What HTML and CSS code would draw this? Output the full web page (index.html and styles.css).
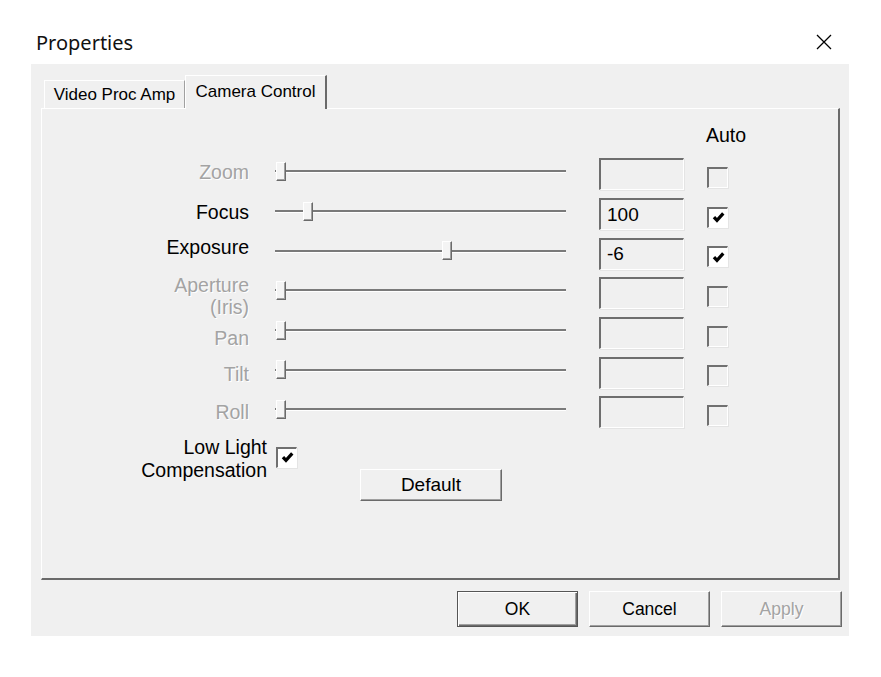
FILE: index.html
```html
<!DOCTYPE html>
<html>
<head>
<meta charset="utf-8">
<title>Properties</title>
<link rel="stylesheet" href="styles.css">
</head>
<body>
<div class="screen">
  <div class="titlebar">
    <span class="title">Properties</span>
    <svg class="close" viewBox="0 0 16 16"><path d="M1 1 L15 15 M15 1 L1 15" stroke="#000" stroke-width="1.3" fill="none"/></svg>
  </div>
  <div class="dialog">
    <div class="tabs">
      <div class="tab">Video Proc Amp</div>
      <div class="tab active">Camera Control</div>
    </div>
    <div class="panel">
      <div class="head"><span class="auto">Auto</span></div>

      <div class="row">
        <div class="label off">Zoom</div>
        <div class="slider"><div class="track"></div><div class="thumb" style="left:3px"></div></div>
        <div class="field"></div>
        <div class="cb"></div>
      </div>
      <div class="row">
        <div class="label">Focus</div>
        <div class="slider"><div class="track"></div><div class="thumb" style="left:30px"></div></div>
        <div class="field">100</div>
        <div class="cb on"><svg viewBox="0 0 12 12"><polyline points="1.8,5.6 4.6,8.6 10.4,2.2" stroke="#000" stroke-width="3" fill="none"/></svg></div>
      </div>
      <div class="row">
        <div class="label raise">Exposure</div>
        <div class="slider"><div class="track"></div><div class="thumb" style="left:169px"></div></div>
        <div class="field">-6</div>
        <div class="cb on"><svg viewBox="0 0 12 12"><polyline points="1.8,5.6 4.6,8.6 10.4,2.2" stroke="#000" stroke-width="3" fill="none"/></svg></div>
      </div>
      <div class="row">
        <div class="label off two">Aperture<br>(Iris)</div>
        <div class="slider"><div class="track"></div><div class="thumb" style="left:3px"></div></div>
        <div class="field"></div>
        <div class="cb"></div>
      </div>
      <div class="row">
        <div class="label off drop7">Pan</div>
        <div class="slider"><div class="track"></div><div class="thumb" style="left:3px"></div></div>
        <div class="field"></div>
        <div class="cb"></div>
      </div>
      <div class="row">
        <div class="label off drop4">Tilt</div>
        <div class="slider"><div class="track"></div><div class="thumb" style="left:3px"></div></div>
        <div class="field"></div>
        <div class="cb"></div>
      </div>
      <div class="row">
        <div class="label off drop2">Roll</div>
        <div class="slider"><div class="track"></div><div class="thumb" style="left:3px"></div></div>
        <div class="field"></div>
        <div class="cb"></div>
      </div>

      <div class="lowlight">
        <div class="ll-label">Low Light<br>Compensation</div>
        <div class="cb on ll-cb"><svg viewBox="0 0 12 12"><polyline points="1.8,5.6 4.6,8.6 10.4,2.2" stroke="#000" stroke-width="3" fill="none"/></svg></div>
        <div class="btn defaultbtn">Default</div>
      </div>
    </div>
    <div class="buttons">
      <div class="btn primary">OK</div>
      <div class="btn">Cancel</div>
      <div class="btn disabled">Apply</div>
    </div>
  </div>
</div>
</body>
</html>
```
FILE: styles.css
```css
body {
  margin: 0;
  background: #fff;
  font-family: "Liberation Sans", Arial, sans-serif;
  color: #000;
}
.screen {
  width: 881px;
  height: 677px;
}
.titlebar {
  height: 44px;
  padding: 20px 49px 0 36px;
  display: flex;
  align-items: center;
  justify-content: space-between;
}
.title {
  font-family: "Noto Sans", sans-serif;
  font-size: 20px;
  color: #111;
}
.close {
  width: 16px;
  height: 16px;
}
.dialog {
  margin-left: 31px;
  width: 818px;
  height: 561px;
  padding-top: 11px;
  background: #f0f0f0;
}
.tabs {
  display: flex;
  align-items: flex-end;
  height: 33px;
  padding-left: 13px;
}
.tab {
  width: 141px;
  height: 28px;
  box-sizing: border-box;
  border-top: 1px solid #fff;
  border-left: 1px solid #fff;
  border-right: 1px solid #a0a0a0;
  font-size: 17px;
  display: flex;
  align-items: center;
  justify-content: center;
  background: #f0f0f0;
}
.tab.active {
  width: 142px;
  height: 34px;
  margin-bottom: -1px;
  border-right: 2px solid #6a6a6a;
  padding-bottom: 2px;
  position: relative;
  z-index: 1;
}
.panel {
  margin-left: 10px;
  width: 799px;
  height: 472px;
  box-sizing: border-box;
  border-top: 1px solid #fff;
  border-left: 1px solid #fff;
  border-right: 2px solid #6a6a6a;
  border-bottom: 2px solid #6a6a6a;
  padding-top: 9px;
}
.head {
  height: 34px;
  display: flex;
  align-items: center;
}
.auto {
  margin-left: 664px;
  font-size: 19.5px;
}
.row {
  height: 39.7px;
  display: flex;
  align-items: center;
}
.label {
  width: 207px;
  text-align: right;
  font-size: 19.5px;
  line-height: 22px;
}
.label.two {
  margin-top: 10px;
}
.label.raise {
  margin-bottom: 8px;
}
.label.drop7 {
  margin-top: 14px;
}
.label.drop4 {
  margin-top: 8px;
}
.label.drop2 {
  margin-top: 4px;
}
.off {
  color: #a3a3a3;
  text-shadow: 1px 1px 0 #fff;
}
.slider {
  position: relative;
  width: 295px;
  height: 22px;
  margin-left: 24px;
  display: flex;
  align-items: center;
}
.track {
  flex: 1;
  margin: 0 2px;
  height: 0;
  border-top: 2px solid #7a7a7a;
  border-bottom: 1px solid #fff;
}
.thumb {
  position: absolute;
  top: 1px;
  width: 10px;
  height: 19px;
  box-sizing: border-box;
  background: #f4f4f4;
  border-top: 1px solid #fff;
  border-left: 1px solid #fff;
  border-right: 1px solid #6a6a6a;
  border-bottom: 1px solid #6a6a6a;
  box-shadow: inset -1px -1px 0 #a0a0a0;
}
.field {
  width: 85px;
  height: 32px;
  margin-left: 31px;
  margin-top: 5px;
  box-sizing: border-box;
  border-top: 2px solid #6e6e6e;
  border-left: 2px solid #6e6e6e;
  border-right: 1px solid #fff;
  border-bottom: 1px solid #fff;
  box-shadow: 1px 1px 0 #e4e4e4;
  padding-left: 6px;
  font-size: 19px;
  display: flex;
  align-items: center;
}
.cb {
  width: 21px;
  height: 21px;
  margin-left: 23px;
  margin-top: 11px;
  box-sizing: border-box;
  border-top: 2px solid #707070;
  border-left: 2px solid #707070;
  border-right: 1px solid #fff;
  border-bottom: 1px solid #fff;
  box-shadow: 1px 1px 0 #e4e4e4;
  background: #f0f0f0;
  display: flex;
  align-items: center;
  justify-content: center;
}
.cb.on {
  background: #fff;
}
.cb svg {
  width: 13px;
  height: 13px;
}
.lowlight {
  display: flex;
  align-items: flex-start;
  margin-top: 6px;
}
.ll-label {
  width: 225px;
  text-align: right;
  font-size: 19.5px;
  line-height: 23px;
}
.ll-cb {
  margin-left: 9px;
  margin-top: 11px;
}
.btn {
  width: 121px;
  height: 36px;
  box-sizing: border-box;
  background: #f0f0f0;
  border-top: 1px solid #fff;
  border-left: 1px solid #fff;
  border-right: 1px solid #6a6a6a;
  border-bottom: 1px solid #6a6a6a;
  box-shadow: inset -1px -1px 0 #a0a0a0;
  font-size: 17.5px;
  display: flex;
  align-items: center;
  justify-content: center;
}
.defaultbtn {
  width: 142px;
  height: 32px;
  margin-left: 63px;
  margin-top: 33px;
  font-size: 19px;
}
.btn.primary {
  border: 1px solid #555;
  box-shadow: inset 1px 1px 0 #fff, inset -1px -1px 0 #6a6a6a, inset -2px -2px 0 #a0a0a0;
}
.btn.disabled {
  color: #a3a3a3;
  text-shadow: 1px 1px 0 #fff;
}
.buttons {
  display: flex;
  justify-content: flex-end;
  gap: 11px;
  margin-top: 11px;
  padding-right: 7px;
}
```
